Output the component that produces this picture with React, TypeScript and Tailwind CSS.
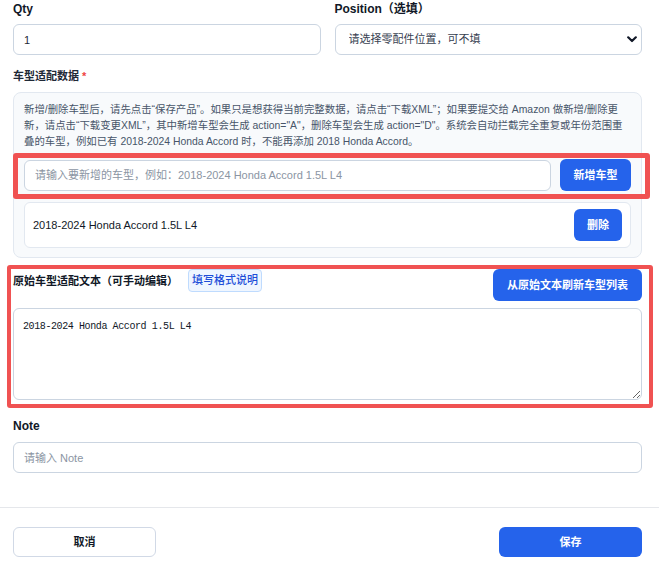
import React from "react";

export default function App() {
  return (
    <div className="w-[659px] h-[569px] bg-white overflow-hidden text-[#111827] font-['Liberation_Sans','Noto_Sans_CJK_SC',sans-serif]">
      <div className="ml-[13px] w-[629px] pt-[1px]">
        <div className="grid grid-cols-2 gap-x-[14px]">
          <div>
            <label className="block text-[12px] leading-4 font-bold text-[#111827]">Qty</label>
            <input
              readOnly
              value="1"
              className="mt-[7px] block w-full h-[31px] rounded-md border border-[#cbd5e1] bg-white px-[10px] text-[11px] text-[#1f2937] outline-none"
            />
          </div>
          <div>
            <label className="block text-[12px] leading-4 font-bold text-[#111827]">Position（选填）</label>
            <div className="relative mt-[7px]">
              <select className="block w-full h-[31px] appearance-none rounded-md border border-[#cbd5e1] bg-white pl-[13px] pr-8 text-[11px] text-[#374151] outline-none">
                <option>请选择零配件位置，可不填</option>
              </select>
              <svg
                className="pointer-events-none absolute right-[5px] top-[12px]"
                width="10"
                height="7"
                viewBox="0 0 10 7"
                fill="none"
              >
                <path d="M1.2 1.3 L5 5 L8.8 1.3" stroke="#111827" strokeWidth="2.2" strokeLinecap="round" strokeLinejoin="round" />
              </svg>
            </div>
          </div>
        </div>

        <div className="mt-[13px] text-[11px] leading-4 font-bold text-[#1f2937]">
          车型适配数据 <span className="text-[#ef4444]">*</span>
        </div>

        <div className="mt-[8px] rounded-lg border border-[#e2e8f0] bg-[#f8fafc] px-[10px] pt-[9px] pb-[9px]">
          <p className="whitespace-nowrap text-[10.4px] leading-4 text-[#475569]">
            新增/删除车型后，请先点击“保存产品”。如果只是想获得当前完整数据，请点击“下载XML”；如果要提交给 Amazon 做新增/删除更
            <br />
            新，请点击“下载变更XML”，其中新增车型会生成 action="A"，删除车型会生成 action="D"。系统会自动拦截完全重复或年份范围重
            <br />
            叠的车型，例如已有 2018-2024 Honda Accord 时，不能再添加 2018 Honda Accord。
          </p>
          <div className="relative mt-[9px] flex items-center gap-[9px]">
            <input
              placeholder="请输入要新增的车型，例如：2018-2024 Honda Accord 1.5L L4"
              className="block flex-1 h-[31px] rounded-md border border-[#cbd5e1] bg-white px-[10px] text-[11px] placeholder:text-[#8b95a3] outline-none"
            />
            <button className="h-8 w-[71px] rounded-md bg-[#2563eb] text-[11px] font-bold text-white">新增车型</button>
            <div className="pointer-events-none absolute -left-[11px] -right-[19px] -top-[6px] -bottom-[8px] rounded-[3px] border-[5px] border-[#f05252]" />
          </div>
          <div className="mt-[11px] flex items-center justify-between rounded-md border border-[#e2e8f0] bg-white pl-2 pr-2 py-[6px]">
            <span className="text-[11px] text-[#111827]">2018-2024 Honda Accord 1.5L L4</span>
            <button className="h-8 w-12 rounded-md bg-[#2563eb] text-[11px] font-bold text-white">删除</button>
          </div>
        </div>

        <div className="relative mt-[11px]">
          <div className="flex items-start justify-between">
            <div className="flex h-[23px] items-center gap-[10px]">
              <span className="text-[11px] leading-4 font-bold text-[#111827]">原始车型适配文本（可手动编辑）</span>
              <span className="flex h-[23px] w-[74px] items-center justify-center rounded border border-[#bfdbfe] bg-[#eff6ff] text-[11px] font-medium text-[#1d4ed8]">
                填写格式说明
              </span>
            </div>
            <button className="h-8 w-[149px] rounded-md bg-[#2563eb] text-[11px] font-bold text-white">从原始文本刷新车型列表</button>
          </div>
          <textarea
            readOnly
            value="2018-2024 Honda Accord 1.5L L4"
            className="mt-[7px] block w-full h-[92px] rounded-md border border-[#cbd5e1] bg-white px-[9px] py-[10px] text-[10px] leading-4 tracking-[-0.4px] text-[#111827] outline-none font-['Liberation_Mono',monospace]"
          />
          <div className="pointer-events-none absolute -left-[6px] -right-[11px] -top-[4px] -bottom-[8px] rounded-[3px] border-4 border-[#f05252]" />
        </div>

        <label className="mt-[18px] block text-[12px] leading-4 font-bold text-[#111827]">Note</label>
        <input
          placeholder="请输入 Note"
          className="mt-2 block w-full h-[31px] rounded-md border border-[#cbd5e1] bg-white px-[10px] text-[11px] placeholder:text-[#8b95a3] outline-none"
        />
      </div>

      <div className="mt-[34px] h-px w-full bg-[#e5e7eb]" />

      <div className="ml-[13px] mt-[19px] flex w-[629px] justify-between">
        <button className="h-[30px] w-[143px] rounded-md border border-[#d1d9e6] bg-white text-[11px] font-bold text-[#111827]">取消</button>
        <button className="h-[30px] w-[143px] rounded-md bg-[#2563eb] text-[11px] font-bold text-white">保存</button>
      </div>
    </div>
  );
}
